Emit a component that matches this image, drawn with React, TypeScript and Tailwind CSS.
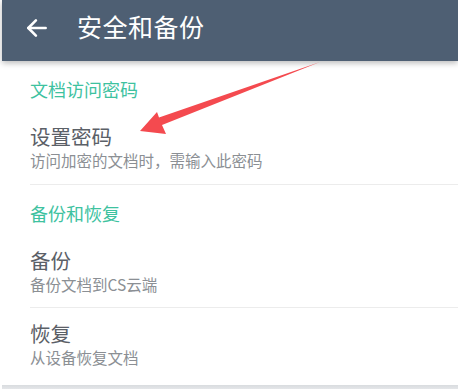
import React from "react";

const font = { fontFamily: '"Noto Sans CJK SC", "Noto Sans", sans-serif' };

function Label({ text }: { text: string }) {
  return (
    <div className="h-[56px] flex items-center pl-[28px] text-[18px] text-[#3ec29f]">{text}</div>
  );
}

export default function App() {
  return (
    <div className="w-[458px] h-[389px] bg-white pl-[2px] relative overflow-hidden" style={font}>
      <div className="relative z-10 h-[61px] bg-[#4e5f73] shadow-[0_2px_6px_rgba(0,0,0,0.28)] flex items-center">
        <svg className="ml-[22px] mt-[-6px]" width="26" height="26" viewBox="0 0 24 24" fill="none" stroke="white" strokeWidth="2.4" strokeLinecap="round" strokeLinejoin="round">
          <path d="M20 12H4" />
          <path d="M11 5l-7 7 7 7" />
        </svg>
        <div className="ml-[27px] mt-[-8px] text-[25px] text-white tracking-[0.5px]">安全和备份</div>
      </div>
      <Label text="文档访问密码" />
      <div className="h-[67px] pt-[7px] flex flex-col pl-[28px]">
        <div className="text-[20.5px] leading-[24px] text-[#5b6067]">设置密码</div>
        <div className="mt-[2px] text-[15.5px] leading-[20px] text-[#8b8f94]">访问加密的文档时，需输入此密码</div>
      </div>
      <div className="ml-[28px] h-px bg-[#ececec]" />
      <Label text="备份和恢复" />
      <div className="h-[66px] pt-[7px] flex flex-col pl-[28px]">
        <div className="text-[20.5px] leading-[24px] text-[#5b6067]">备份</div>
        <div className="mt-[2px] text-[15.5px] leading-[20px] text-[#8b8f94]">备份文档到CS云端</div>
      </div>
      <div className="ml-[28px] h-px bg-[#ececec]" />
      <div className="h-[77px] pt-[13px] flex flex-col pl-[28px]">
        <div className="text-[20.5px] leading-[24px] text-[#5b6067]">恢复</div>
        <div className="mt-[2px] text-[15.5px] leading-[20px] text-[#8b8f94]">从设备恢复文档</div>
      </div>
      <div className="h-[6px] bg-gradient-to-b from-[#d9dcdf] to-[#e9ebed]" />
      <svg className="absolute left-0 top-0 z-20 pointer-events-none" width="458" height="389" viewBox="0 0 458 389">
        <polygon points="140,131 157,112 159,117.5 320,62 162,125 166,134" fill="#f44a4f" />
      </svg>
    </div>
  );
}
